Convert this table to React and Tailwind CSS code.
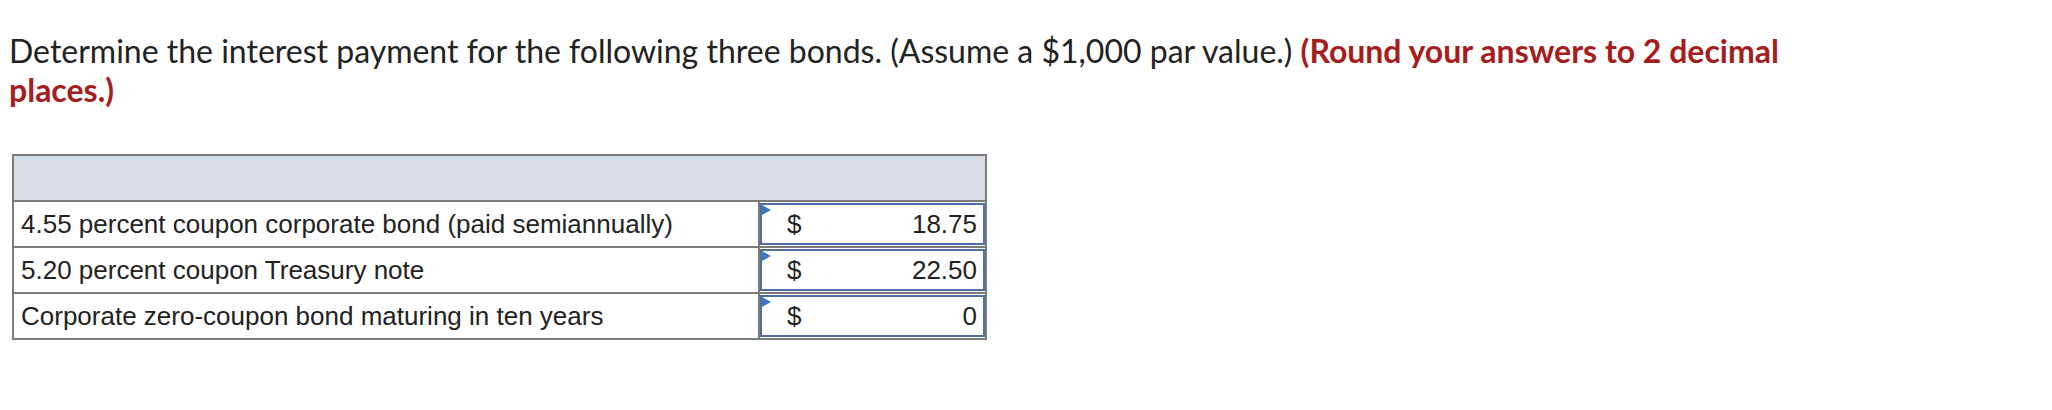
import React from 'react';

const rows = [
    { label: "4.55 percent coupon corporate bond (paid semiannually)", value: "18.75" },
    { label: "5.20 percent coupon Treasury note", value: "22.50" },
    { label: "Corporate zero-coupon bond maturing in ten years", value: "0" },
];

export default function App() {
    return (
        <div className="bg-white w-[2052px] h-[410px] pt-[31px] pl-[9px]">
            <p className="text-[32px] leading-[39px] text-[#222222] w-[1800px]" style={{ fontFamily: "Lato, 'Open Sans', sans-serif" }}>
                Determine the interest payment for the following three bonds. (Assume a $1,000 par value.){" "}
                <span className="font-bold text-[#a51d1d]">(Round your answers to 2 decimal places.)</span>
            </p>

            <table className="mt-[45px] ml-[3px] border-collapse text-[26px] text-[#222222]" style={{ fontFamily: "'Liberation Sans', Arial, sans-serif" }}>
                <thead>
                <tr>
                    <th colSpan={2} className="h-[46px] bg-[#d8dde6] border-2 border-[#7b7b7b]"></th>
                </tr>
                </thead>
                <tbody>
                {rows.map((r, i) => (
                    <tr key={i}>
                        <td className="w-[746px] h-[46px] border-2 border-[#7b7b7b] pl-[7px] font-normal leading-none">{r.label}</td>
                        <td className="w-[227px] h-[46px] border-2 border-[#7b7b7b] p-0">
                            <div className="relative h-[42px] border-2 border-[#4f6fa0] flex items-center pl-[25px] pr-[6px] leading-none">
                                <span className="absolute left-0 top-0 w-0 h-0 border-t-[5px] border-b-[5px] border-l-[9px] border-t-transparent border-b-transparent border-l-[#3b78c2]"></span>
                                <span>$</span>
                                <span className="ml-auto">{r.value}</span>
                            </div>
                        </td>
                    </tr>
                ))}
                </tbody>
            </table>
        </div>
    );
}
